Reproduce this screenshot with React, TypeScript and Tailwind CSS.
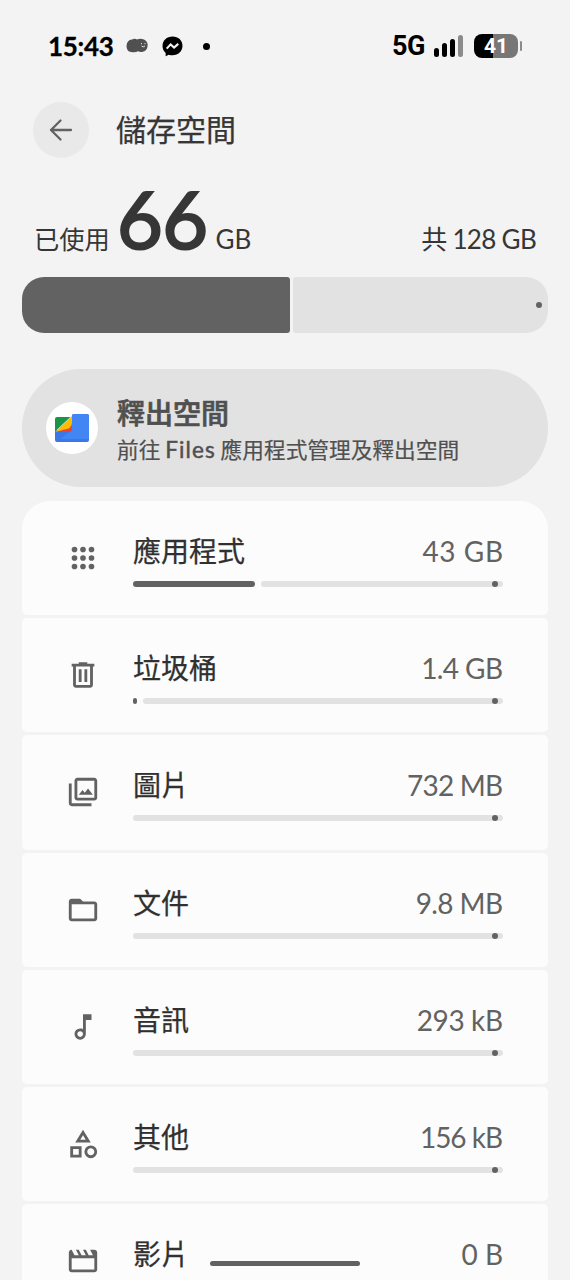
import React from "react";

const latin = "font-['Lato','Noto_Sans_CJK_TC',sans-serif]";
const cjk = "font-['Noto_Sans_CJK_TC',sans-serif]";

type Item = {
  name: string;
  size: string;
  icon: React.ReactNode;
  fill?: string;
  spacing: string;
};

function Icon({ children }: { children: React.ReactNode }) {
  return (
    <svg viewBox="0 0 24 24" className="size-[34px] shrink-0 fill-[#626262]">
      {children}
    </svg>
  );
}

const items: Item[] = [
  {
    name: "應用程式",
    size: "43 GB",
    fill: "w-[122px]",
    spacing: "tracking-[0.6px] -mr-[0.6px]",
    icon: <>{[6, 12, 18].map((y) => [6, 12, 18].map((x) => <circle key={`${x}-${y}`} cx={x} cy={y} r="2" />))}</>,
  },
  {
    name: "垃圾桶",
    size: "1.4 GB",
    fill: "w-[4px]",
    spacing: "tracking-[-0.6px] mr-[0.6px]",
    icon: (
      <path d="M7 21q-.825 0-1.412-.587T5 19V6H4V4h5V3h6v1h5v2h-1v13q0 .825-.587 1.413T17 21zM17 6H7v13h10zM9 17h2V8H9zm4 0h2V8h-2z" />
    ),
  },
  {
    name: "圖片",
    size: "732 MB",
    spacing: "tracking-[-0.8px] mr-[0.7px]",
    icon: (
      <path d="M9 14h10l-3.45-4.5-2.3 3-1.55-2zM8 18q-.825 0-1.412-.587T6 16V4q0-.825.588-1.412T8 2h12q.825 0 1.413.588T22 4v12q0 .825-.587 1.413T20 18zm0-2h12V4H8zm-4 6q-.825 0-1.412-.587T2 20V6h2v14h14v2z" />
    ),
  },
  {
    name: "文件",
    size: "9.8 MB",
    spacing: "tracking-[-0.6px] mr-[0.6px]",
    icon: (
      <path d="M4 20q-.825 0-1.412-.587T2 18V6q0-.825.588-1.412T4 4h6l2 2h8q.825 0 1.413.588T22 8v10q0 .825-.587 1.413T20 20zm0-2h16V8H4z" />
    ),
  },
  {
    name: "音訊",
    size: "293 kB",
    spacing: "tracking-[-0.4px] mr-[0.4px]",
    icon: (
      <path d="M10 21q-1.650 0-2.825-1.175T6 17t1.175-2.825T10 13q.575 0 1.063.138t.937.412V3h6v4h-4v10q0 1.650-1.175 2.825T10 21m0-2q.825 0 1.413-.587T12 17t-.587-1.412T10 15t-1.412.588T8 17t.588 1.413T10 19" fillRule="evenodd" />
    ),
  },
  {
    name: "其他",
    size: "156 kB",
    spacing: "tracking-[-1px] mr-[0.9px]",
    icon: (
      <path
        fillRule="evenodd"
        d="m6.500 11 5.500-9 5.500 9zM17.500 22q-1.875 0-3.187-1.312T13 17.500t1.313-3.187T17.500 13t3.188 1.313T22 17.500t-1.312 3.188T17.500 22M3 21.500v-8h8v8zM17.500 20q1.050 0 1.775-.725T20 17.500t-.725-1.775T17.500 15t-1.775.725T15 17.500t.725 1.775T17.500 20M5 19.500h4v-4H5zM10.050 9h3.900L12 5.850z"
      />
    ),
  },
  {
    name: "影片",
    size: "0 B",
    spacing: "tracking-[0px]",
    icon: (
      <path d="m4 4 2 4h3L7 4h2l2 4h3l-2-4h2l2 4h3l-2-4h3q.825 0 1.413.588T22 6v12q0 .825-.587 1.413T20 20H4q-.825 0-1.412-.587T2 18V6q0-.825.588-1.412T4 4m0 6v8h16v-8z" />
    ),
  },
];

function StatusBar() {
  return (
    <div className={`flex h-[92px] shrink-0 items-center pl-[48px] pr-[48px] text-black ${latin}`}>
      <span className="w-[66px] whitespace-nowrap font-['Lato',sans-serif] text-[26px] font-bold leading-none tracking-[-0.3px] [-webkit-text-stroke:0.3px_black]">15:43</span>
      <svg viewBox="0 0 22 16" className="ml-[12px] h-[16px] w-[22px]">
        <path fill="#505050" d="M6 1.500q3-1.500 5 0Q14 0 18 1.500q3.500 1.500 3.700 5.500-.2 6-5.700 7-2 .3-4-.7-2.500 1.500-7 .7Q.5 13.500.500 8 .800 2 6 1.500Z" />
        <path d="M15.500 5v1.200M19 5v1.200M15.500 8q1.800 1.800 3.500 0" fill="none" stroke="#ddd" strokeWidth="1" />
      </svg>
      <svg viewBox="0 0 20 20" className="ml-[14px] size-[21px]">
        <path d="M10 .5C4.500.5.500 4.300.500 9.500c0 2.700 1.100 5 3 6.600v3.200l2.900-1.500c1.100.4 2.300.6 3.600.6 5.500 0 9.500-3.800 9.500-9S15.500.500 10 .500Z" />
        <path d="m4.500 12 3.700-4 3.300 3 4-3.500" fill="none" stroke="#f3f3f3" strokeWidth="2" />
      </svg>
      <span className="ml-[20px] size-[7px] rounded-full bg-black" />
      <span className="ml-auto w-[42px] whitespace-nowrap font-['Roboto',sans-serif] text-[27px] font-bold leading-none tracking-[-0.4px]">5G</span>
      <div className="flex h-[22px] w-[31px] items-end gap-[3px]">
        <i className="h-[9px] w-[5px] rounded-full bg-black" />
        <i className="h-[14px] w-[5px] rounded-full bg-black" />
        <i className="h-[18px] w-[5px] rounded-full bg-black" />
        <i className="h-[22px] w-[5px] rounded-full bg-[#8b8b8b]" />
      </div>
      <div className="ml-[9px] flex h-[24px] w-[44px] items-center justify-center rounded-[8px] bg-linear-to-r from-black from-43% to-[#777] to-43% font-['Roboto',sans-serif] text-[21px] font-bold leading-none text-white">
        41
      </div>
      <span className="ml-[2px] h-[10px] w-[2px] rounded-full bg-[#8a8a8a]" />
    </div>
  );
}

function Row({ item, first }: { item: Item; first: boolean }) {
  return (
    <div className={`flex h-[114.2px] shrink-0 items-center rounded-[5px] bg-[#fcfcfc] pl-[44px] pr-[45px] ${first ? "rounded-t-[28px]" : ""}`}>
      <Icon>{item.icon}</Icon>
      <div className="ml-[33px] flex flex-1 flex-col pt-[2px]">
        <div className="flex h-[40px] items-center justify-between">
          <span className={`pb-[2px] text-[28px] leading-[38px] text-[#303030] [-webkit-text-stroke:0.25px_#303030] ${cjk}`}>{item.name}</span>
          <span className={`text-[28px] leading-[40px] text-[#626262] ${latin} ${item.spacing}`}>{item.size}</span>
        </div>
        <div className="mt-[10px] flex h-[6px] gap-[6px]">
          {item.fill && <span className={`rounded-full bg-[#626262] ${item.fill}`} />}
          <span className="flex flex-1 justify-end rounded-full bg-[#e2e2e2] pr-[5px]">
            <i className="size-[6px] rounded-full bg-[#626262]" />
          </span>
        </div>
      </div>
    </div>
  );
}

export default function App() {
  return (
    <main className="relative flex h-[1280px] w-[570px] flex-col overflow-hidden bg-[#f3f3f3] text-[#363636]">
      <StatusBar />
      <header className="flex h-[76px] shrink-0 items-center pl-[33px]">
        <button className="flex size-[56px] items-center justify-center rounded-full bg-[#e9e9e9]" aria-label="返回">
          <svg viewBox="0 0 24 24" className="size-[24px]" fill="none" stroke="#626262" strokeWidth="2.300" strokeLinecap="round" strokeLinejoin="round">
            <path d="M22 12H2M11.500 2.500 2 12l9.500 9.500" />
          </svg>
        </button>
        <h1 className={`ml-[27px] pb-[4px] text-[30px] leading-[44px] [-webkit-text-stroke:0.25px_#363636] ${cjk}`}>儲存空間</h1>
      </header>

      <section className="flex h-[109px] shrink-0 items-baseline whitespace-nowrap pl-[34px] pr-[33px]">
        <span className={`text-[25.300px] leading-none ${cjk}`}>已使用</span>
        <span className={`ml-[7px] text-[79px] leading-[102px] tracking-[-0.5px] [-webkit-text-stroke:2.2px_#363636] ${latin}`}>66</span>
        <span className={`ml-[8px] text-[26px] leading-none ${latin}`}>GB</span>
        <span className={`ml-auto mr-[1px] text-[26px] leading-none tracking-[-0.7px] ${latin}`}>共 128 GB</span>
      </section>

      <div className="mx-[22px] flex h-[56px] shrink-0 gap-[3px]">
        <div className="w-[268px] rounded-l-[22px] rounded-r-[3px] bg-[#626262]" />
        <div className="flex flex-1 items-center justify-end rounded-l-[3px] rounded-r-[22px] bg-[#e2e2e2] pr-[6px]">
          <i className="size-[6px] rounded-full bg-[#626262]" />
        </div>
      </div>

      <section className="mx-[22px] mt-[36px] flex h-[118px] shrink-0 items-center rounded-full bg-[#e2e2e2] pl-[24px]">
        <div className="flex size-[52px] items-center justify-center rounded-full bg-white">
          <svg viewBox="0 0 36 30" className="h-[30px] w-[36px]">
            <path fill="#3b78e7" d="M1 17h17V2.500q0-1.500 2-1.500h13q2 0 2 2v24q0 2-2 2H3q-2 0-2-2Z" />
            <path fill="#4285f4" d="M18 2.500q0-1.500 2-1.500h13q2 0 2 2v23H6l12-9Z" />
            <path fill="#ea4335" d="M18 5v12q0 2-2 2H1l11-6Z" />
            <path fill="#fbbc04" d="M18 3v6q0 4-3.500 6.500L1 19Z" />
            <path fill="#189548" d="M3 4h12q2 0 3-1.500L1 18.500V6q0-2 2-2Z" />
          </svg>
        </div>
        <div className={`ml-[19px] flex flex-col pt-[4px] text-[#505050] ${cjk}`}>
          <span className="text-[28px] font-medium leading-[39px] [-webkit-text-stroke:0.7px_#505050]">釋出空間</span>
          <span className="whitespace-nowrap text-[21.700px] leading-[34px] [-webkit-text-stroke:0.2px_#505050]">
            前往 <span className="font-['Lato',sans-serif] text-[22.500px] tracking-[1.100px] [-webkit-text-stroke:0.5px_#505050]">Files</span> 應用程式管理及釋出空間
          </span>
        </div>
      </section>

      <section className="mx-[22px] mt-[14px] flex flex-col gap-[3px]">
        {items.map((item, i) => (
          <Row key={item.name} item={item} first={i === 0} />
        ))}
      </section>

      <div className="absolute left-[210px] top-[1261px] h-[5px] w-[150px] rounded-full bg-[#626262]" />
    </main>
  );
}
